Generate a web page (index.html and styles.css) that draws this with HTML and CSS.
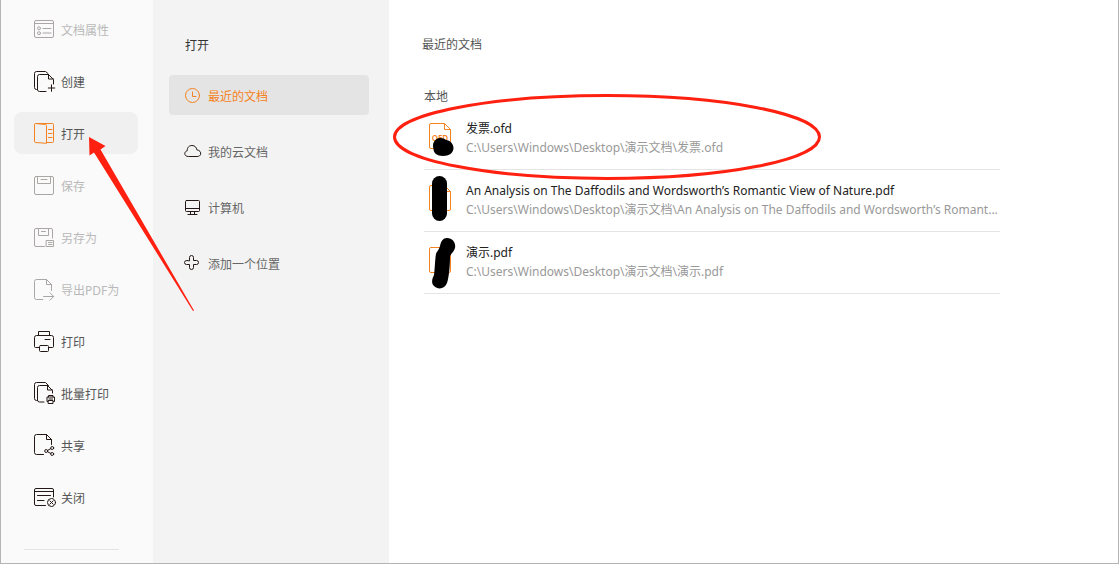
FILE: index.html
```
<!DOCTYPE html>
<html lang="zh-CN">
<head>
<meta charset="utf-8">
<meta name="viewport" content="width=device-width, initial-scale=1">
<title>打开</title>
<link rel="stylesheet" href="styles.css">
</head>
<body>
<div class="app">
  <nav class="menu">
    <button class="menu-item" disabled>
      <svg class="menu-icon" viewBox="0 0 24 24"><rect x="1.5" y="3.5" width="19" height="17" rx="1.5"/><path d="M1.5 6.5h19M10 11.5h8M10 16h8"/><circle cx="6" cy="11.3" r="1.5"/><circle cx="6" cy="16.2" r="1.5"/></svg>
      <span>文档属性</span>
    </button>
    <button class="menu-item">
      <svg class="menu-icon" viewBox="0 0 24 24"><path d="M4.5 20.5H3.5a2 2 0 0 1-2-2v-14a2 2 0 0 1 2-2H12.5l2.5 2"/><path d="M13 22.5H6.500a2 2 0 0 1-2-2V7.500a2 2 0 0 1 2-2H15.500l5 5V15M15.500 5.500V10h5M18.500 15.800v6.500M15.300 19h6.500"/></svg>
      <span>创建</span>
    </button>
    <button class="menu-item is-active" aria-current="page">
      <svg class="menu-icon accent" viewBox="0 0 24 24"><path d="M3 2.500h16.500a1 1 0 0 1 1 1v17a1 1 0 0 1-1 1H13.500M1.500 3.500a1 1 0 0 1 1-1L12.500 3.500a1 1 0 0 1 1 1V22.300L2.500 21.500a1 1 0 0 1-1-1zM15.500 8.500h3.500M15.500 12.500h3.500M15.500 16.500h3.500"/></svg>
      <span>打开</span>
    </button>
    <button class="menu-item" disabled>
      <svg class="menu-icon" viewBox="0 0 24 24"><rect x="1.500" y="3.500" width="19" height="18" rx="1.500"/><path d="M4.500 3.500v7h13v-7M8 6.500h6"/></svg>
      <span>保存</span>
    </button>
    <button class="menu-item" disabled>
      <svg class="menu-icon" viewBox="0 0 24 24"><path d="M11.500 21.500H3a1.500 1.500 0 0 1-1.500-1.500V5A1.500 1.500 0 0 1 3 3.500H18A1.500 1.500 0 0 1 19.500 5V13M5.500 3.500v7h10v-7M8.500 6.500h4"/><rect x="13.500" y="15.500" width="7" height="6"/><path d="M15.500 17.500h3.500M15.500 19.500h3.500"/></svg>
      <span>另存为</span>
    </button>
    <button class="menu-item" disabled>
      <svg class="menu-icon" viewBox="0 0 24 24"><path d="M10 22.500H3.500a2 2 0 0 1-2-2V4.500a2 2 0 0 1 2-2H13.500l5 5V13.500M13.500 2.500V7.500h5M10.500 19.500h10M17 15.800l3.700 3.700L17 23.200"/></svg>
      <span>导出PDF为</span>
    </button>
    <button class="menu-item">
      <svg class="menu-icon" viewBox="0 0 24 24"><path d="M6.500 18.500H2.500a1 1 0 0 1-1-1V8.500a2 2 0 0 1 2-2H18.500a2 2 0 0 1 2 2v9a1 1 0 0 1-1 1H15.500M5.500 6.500v-4h11v4M12 10.500h5"/><rect x="6.500" y="16.500" width="9" height="6" rx="1"/></svg>
      <span>打印</span>
    </button>
    <button class="menu-item">
      <svg class="menu-icon" viewBox="0 0 24 24"><path d="M4.500 19.500H3.500a2 2 0 0 1-2-2v-14a2 2 0 0 1 2-2H12.500l3 3"/><path d="M11 21H6.500a2 2 0 0 1-2-2V6.500a2 2 0 0 1 2-2H14.500l5 5V12M14.500 4.500V9h5M15.500 16v-1.500h4.500V16M15 20.500h-1v-4.500h7.500v4.500h-1M16 18h3.500"/><rect x="15.500" y="19.500" width="4.500" height="3"/></svg>
      <span>批量打印</span>
    </button>
    <button class="menu-item">
      <svg class="menu-icon" viewBox="0 0 24 24"><path d="M10.500 21.500H3.500a2 2 0 0 1-2-2V3.500a2 2 0 0 1 2-2H13.500l5 5V11.500M13.500 1.500V6.500h5M14.700 17.300l3-1.600M14.700 18.800l3 1.600"/><circle cx="13.200" cy="18" r="1.500"/><circle cx="19.200" cy="15" r="1.500"/><circle cx="19.200" cy="21" r="1.500"/></svg>
      <span>共享</span>
    </button>
    <button class="menu-item">
      <svg class="menu-icon" viewBox="0 0 24 24"><path d="M12.500 20.500H3a1.500 1.500 0 0 1-1.500-1.500V5A1.500 1.500 0 0 1 3 3.500H19A1.500 1.500 0 0 1 20.500 5V12M1.500 6.500h19M4.500 10.500h13M4.500 15.500h6.500"/><circle cx="18.500" cy="17.500" r="4"/><path d="M16.800 15.800l3.400 3.400M20.200 15.800l-3.400 3.400"/></svg>
      <span>关闭</span>
    </button>
    <hr class="menu-divider">
  </nav>

  <section class="places">
    <h1 class="places-title">打开</h1>
    <button class="place is-active" aria-current="true">
      <svg class="place-icon accent" viewBox="0 0 18 18"><circle cx="8.500" cy="9.500" r="7"/><path d="M8.500 6v4.500h3.500"/></svg>
      <span>最近的文档</span>
    </button>
    <button class="place">
      <svg class="place-icon" viewBox="0 0 18 18"><path d="M4 14.500C-.2 14.500-.2 9.500 3.200 8.800C3.200 5 5.500 3.500 8 3.500C11 3.500 12.500 5.500 12.800 7.800C18 8.500 18 14.500 13.500 14.500z"/></svg>
      <span>我的云文档</span>
    </button>
    <button class="place">
      <svg class="place-icon" viewBox="0 0 18 18"><rect x="1.500" y="2.500" width="14" height="11" rx="1"/><path d="M1.500 10.500h14M6.500 13.500v3M10.500 13.500v3M4 16.500h9"/></svg>
      <span>计算机</span>
    </button>
    <button class="place">
      <svg class="place-icon" viewBox="0 0 18 18"><path d="M5.500 6.500V3.500a2 2 0 0 1 4 0V6.500h3a2 2 0 0 1 0 4h-3v3a2 2 0 0 1-4 0v-3h-3a2 2 0 0 1 0-4z"/></svg>
      <span>添加一个位置</span>
    </button>
  </section>

  <main class="recent">
    <h2 class="recent-title">最近的文档</h2>
    <h3 class="recent-group">本地</h3>
    <ul class="files">
      <li class="file">
        <svg class="file-icon" viewBox="0 0 24 28"><path d="M3 1.500H16.500l6 6V25a1.500 1.500 0 0 1-1.500 1.500H3A1.500 1.500 0 0 1 1.500 25V3A1.500 1.500 0 0 1 3 1.500zM16.500 1.500V7.500h6"/><text x="12" y="19" text-anchor="middle">OFD</text></svg>
        <div class="file-text"><a class="file-name" href="#">发票.ofd</a><span class="file-path">C:\Users\Windows\Desktop\演示文档\发票.ofd</span></div>
      </li>
      <li class="file">
        <svg class="file-icon" viewBox="0 0 24 28"><path d="M3 1.500H16.500l6 6V25a1.500 1.500 0 0 1-1.500 1.500H3A1.500 1.500 0 0 1 1.500 25V3A1.500 1.500 0 0 1 3 1.500zM16.500 1.500V7.500h6"/></svg>
        <div class="file-text"><a class="file-name" href="#">An Analysis on The Daffodils and Wordsworth’s Romantic View of Nature.pdf</a><span class="file-path">C:\Users\Windows\Desktop\演示文档\An Analysis on The Daffodils and Wordsworth’s Romant...</span></div>
      </li>
      <li class="file">
        <svg class="file-icon" viewBox="0 0 24 28"><path d="M3 1.500H16.500l6 6V25a1.500 1.500 0 0 1-1.500 1.500H3A1.500 1.500 0 0 1 1.500 25V3A1.500 1.500 0 0 1 3 1.500zM16.500 1.500V7.500h6"/></svg>
        <div class="file-text"><a class="file-name" href="#">演示.pdf</a><span class="file-path">C:\Users\Windows\Desktop\演示文档\演示.pdf</span></div>
      </li>
    </ul>
  </main>

  <svg class="marks" viewBox="0 0 1119 564" width="1119" height="564" aria-hidden="true">
    <path class="mark-fill" d="M89 137L105.500 146L100.500 149.500L194 310.500L193 311L94 152.500L89.500 155.500z"/>
    <ellipse class="mark-ring" cx="607" cy="137" rx="212.500" ry="41.500"/>
    <path class="mark-ink" d="M436 139.500C439 137 444 138 446 140C450 140 453.500 144 453.500 148C453.500 153 449 156 443 156C437 156 433.500 153 433.500 149C432.500 145 433 142 436 139.500z"/>
    <rect class="mark-ink" x="432" y="176" width="15" height="45" rx="7.500"/>
    <path class="mark-ink" d="M447 238C453 238 456 243 455 248C454 252 450 254 450 257C450 265 449 277 447 283C445 289 438 290 434 286C431 283 432 279 434 275C435 268 435 259 436 254C437 251 439 250 440 246C441 241 443 238 447 238z"/>
  </svg>
</div>
</body>
</html>
```
FILE: styles.css
```
* { box-sizing: border-box; }

body {
  margin: 0;
  font-family: "Noto Sans", "Noto Sans CJK SC", sans-serif;
  font-size: 12px;
  line-height: 18px;
  color: #333;
  background: #fff;
}

.app {
  position: relative;
  display: flex;
  min-height: 100vh;
  border: 1px solid #b4b4b4;
  border-top: 0;
}

button {
  display: flex;
  align-items: center;
  border: 0;
  background: none;
  font: inherit;
  color: #555;
  text-align: left;
}

button span { padding-top: 3px; }

svg { flex: none; }

.menu {
  display: flex;
  flex-direction: column;
  gap: 10px;
  flex: 0 0 152px;
  padding: 8px 15px 0 13px;
  background: #fafafa;
}

.menu-item {
  gap: 4px;
  height: 42px;
  padding: 0 0 0 19px;
  border-radius: 8px;
}

.menu-item:disabled { color: #b9b9b9; }
.menu-item.is-active { background: #f0f0f0; }

.menu-icon {
  width: 24px;
  height: 24px;
}

.menu-icon,
.place-icon {
  fill: none;
  stroke: #231815;
  stroke-linecap: round;
  stroke-linejoin: round;
}

.menu-item:disabled .menu-icon { stroke: #aaa6a6; }
.menu-icon.accent,
.place-icon.accent { stroke: #f58220; }

.menu-divider {
  width: 95px;
  margin: 21px 0 0 10px;
  border: 0;
  border-top: 1px solid #e4e4e4;
}

.places {
  display: flex;
  flex-direction: column;
  gap: 16px;
  flex: 0 0 236px;
  padding: 37px 20px 0 16px;
  background: #f3f3f3;
}

.places-title {
  margin: 0 0 4px 16px;
  font-size: 12px;
  font-weight: 400;
}

.place {
  gap: 6px;
  height: 40px;
  padding: 0 0 0 15px;
  border-radius: 4px;
  color: #666;
}

.place.is-active {
  background: #e4e4e4;
  color: #f58220;
}

.place-icon {
  width: 18px;
  height: 18px;
}

.recent {
  flex: 1;
  min-width: 0;
  padding: 36px 118px 0 35px;
}

.recent-title,
.recent-group {
  margin: 0;
  font-size: 12px;
  font-weight: 400;
  color: #555;
}

.recent-title { margin: 0 0 34px -2px; }

.files {
  margin: 2px 0 0;
  padding: 0;
  list-style: none;
}

.file {
  display: flex;
  align-items: center;
  gap: 14px;
  height: 62px;
  padding: 0 4px;
  border-bottom: 1px solid #e4e4e4;
}

.file-icon {
  width: 24px;
  height: 28px;
  margin-bottom: 5px;
  fill: none;
  stroke: #f58220;
}

.file-icon text {
  fill: #f58220;
  stroke: none;
  font-size: 8px;
  font-weight: 600;
}

.file-text {
  display: flex;
  flex-direction: column;
  gap: 1px;
  min-width: 0;
  white-space: nowrap;
}

.file-name {
  color: #222;
  text-decoration: none;
}

.file-path { color: #999; }

.marks {
  position: absolute;
  top: 0;
  left: -1px;
  pointer-events: none;
}

.mark-fill { fill: #ff2010; }

.mark-ring {
  fill: none;
  stroke: #ff2010;
  stroke-width: 3;
}

.mark-ink { fill: #000; }
```
